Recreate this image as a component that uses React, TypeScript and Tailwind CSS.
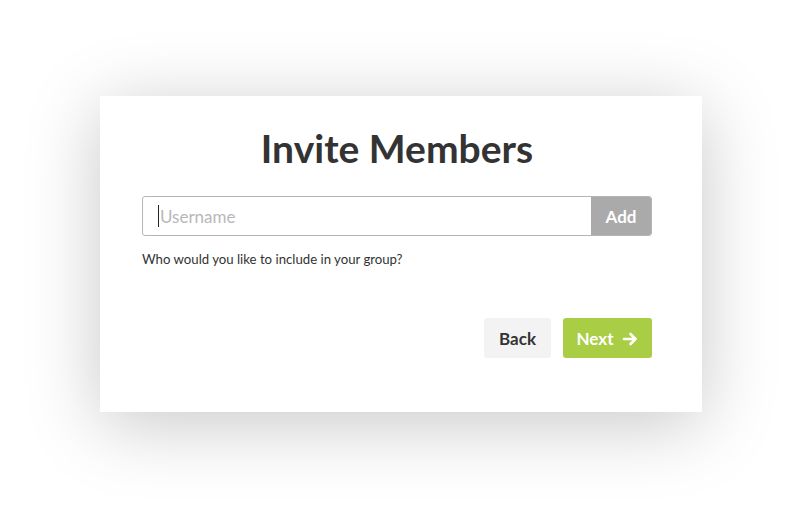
import React from "react";

function ArrowRight() {
  return (
    <svg width="16" height="16" viewBox="0 0 16 16" fill="none" stroke="currentColor" strokeWidth="2.6" strokeLinecap="round" strokeLinejoin="round">
      <path d="M2 8h11" />
      <path d="M8.5 3l5 5-5 5" />
    </svg>
  );
}

export default function App() {
  return (
    <div
      className="min-h-screen w-full bg-white flex items-start justify-center pt-[96px]"
      style={{ fontFamily: "Lato, 'Noto Sans', sans-serif" }}
    >
      <div className="w-[602px] h-[316px] bg-white shadow-[0_12px_70px_rgba(0,0,0,0.22)] pl-[42px] pr-[50px] pt-[26px] flex flex-col">
        <h1 className="text-center text-[39px] leading-[52px] font-bold text-[#333333]">Invite Members</h1>
        <div className="mt-[22px] flex h-[40px] rounded-[3px] border border-[#b5b5b5] overflow-hidden">
          <div className="flex-1 flex items-center pl-[15px]">
            <span className="w-px h-[22px] bg-[#222]" />
            <span className="ml-[1px] pt-[2px] text-[17px] text-[#b8b8b8]">Username</span>
          </div>
          <button className="w-[60px] pt-[2px] bg-[#aaaaaa] text-white text-[17px] font-bold">Add</button>
        </div>
        <p className="mt-[14px] text-[13.2px] text-[#333333]">Who would you like to include in your group?</p>
        <div className="mt-[48px] flex justify-end gap-[12px]">
          <button className="h-[40px] w-[67px] pt-[2px] rounded-[3px] bg-[#f3f3f3] text-[17px] font-bold text-[#333333]">Back</button>
          <button className="h-[40px] w-[89px] pt-[2px] rounded-[3px] bg-[#a9cd45] text-[17px] font-bold text-white flex items-center justify-center gap-[9px]">
            Next
            <ArrowRight />
          </button>
        </div>
      </div>
    </div>
  );
}
